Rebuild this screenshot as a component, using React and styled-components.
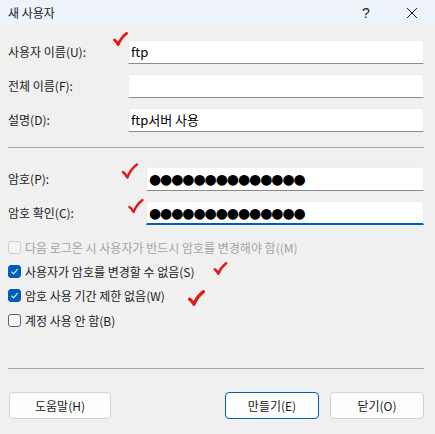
import React from 'react'
import styled, { createGlobalStyle } from 'styled-components'

const GlobalStyle = createGlobalStyle`
    html, body {
        margin: 0;
        padding: 0;
        background: #f0f0f0;
    }
    body {
        font-family: "Noto Sans CJK KR", "Noto Sans", sans-serif;
        font-size: 12px;
        color: #1a1a1a;
    }
`

// Dialog shell

const Dialog = styled.div`
    position: relative;
    width: 435px;
    height: 434px;
    background: #f0f0f0;
    display: flex;
    flex-direction: column;
    overflow: hidden;
`

const TitleBar = styled.div`
    height: 26px;
    background: #eef2f9;
    display: flex;
    align-items: center;
    padding-left: 8px;
`

const Title = styled.div`
    flex: 1;
    line-height: 16px;
`

const TitleButton = styled.div`
    width: 46px;
    height: 26px;
    display: flex;
    align-items: center;
    justify-content: center;
    font-family: "Liberation Sans", sans-serif;
    font-size: 14px;
`

const Body = styled.div`
    display: flex;
    flex-direction: column;
    padding: 0 11px 0 8px;
`

// Rows of label + field

const FieldGroup = styled.div`
    display: grid;
    grid-template-columns: ${p => p.labelWidth}px 1fr;
    row-gap: 10px;
    align-items: center;
    padding-top: ${p => p.top}px;
`

const Label = styled.div`
    line-height: 16px;
    white-space: nowrap;
`

const Input = styled.div`
    height: 24px;
    box-sizing: border-box;
    background: #fff;
    border: 1px solid #ececec;
    border-bottom: ${p => (p.focused ? '2px solid #005fb8' : '1px solid #8a8a8a')};
    border-radius: 3px 3px 0 0;
    padding: 0 2px;
    display: flex;
    align-items: center;
    font-size: 13px;
    line-height: 16px;
    color: #000;
`

const Dots = styled.span`
    font-family: "DejaVu Sans", sans-serif;
    font-size: 14px;
    letter-spacing: -1.1px;
    line-height: 16px;
`

const Separator = styled.div`
    height: 1px;
    background: #a6a6a6;
    margin-top: ${p => p.top}px;
`

// Checkbox list

const CheckList = styled.div`
    display: flex;
    flex-direction: column;
    padding-top: 10px;
`

const CheckRow = styled.label`
    height: 24.3px;
    display: flex;
    align-items: center;
    gap: 4px;
    color: ${p => (p.disabled ? '#a3a3a3' : '#1a1a1a')};
    white-space: nowrap;
`

const Box = styled.span`
    width: 13px;
    height: 13px;
    box-sizing: border-box;
    border-radius: 3px;
    display: flex;
    align-items: center;
    justify-content: center;
    background: ${p => (p.checked ? '#005fb8' : p.disabled ? '#f5f5f5' : '#f9f9f9')};
    border: 1px solid ${p => (p.checked ? '#005fb8' : p.disabled ? '#cfcfcf' : '#5c5c5c')};
`

const Checkbox = ({ checked, disabled, children }) => (
    <CheckRow disabled={disabled}>
        <Box checked={checked} disabled={disabled}>
            {checked && (
                <svg width="9" height="9" viewBox="0 0 9 9">
                    <path d="M1.5 4.8 L3.6 6.8 L7.6 2.2" fill="none" stroke="#fff" strokeWidth="1.1" />
                </svg>
            )}
        </Box>
        <span>{children}</span>
    </CheckRow>
)

// Footer buttons

const Footer = styled.div`
    display: flex;
    align-items: center;
    padding-top: 23px;
    padding-left: 1px;
    gap: 11px;
`

const Button = styled.div`
    width: ${p => p.w}px;
    height: 27px;
    box-sizing: border-box;
    background: #fdfdfd;
    border: 1px solid ${p => (p.primary ? '#005fb8' : '#d3d3d3')};
    border-radius: 4px;
    display: flex;
    align-items: center;
    justify-content: center;
    line-height: 16px;
    color: #1a1a1a;
`

const Spacer = styled.div`
    flex: 1;
`

// Red hand-drawn marks over the dialog

const Mark = styled.svg`
    position: absolute;
    left: ${p => p.x}px;
    top: ${p => p.y}px;
`

const RedCheck = ({ x, y, w = 16, h = 15, heavy }) => (
    <Mark x={x} y={y} width={w} height={h} viewBox="0 0 16 15">
        <path
            d="M1.5 8.5 C3 9.5 4.5 11.5 5.5 13.5 C7.5 8.5 10.5 4.5 14.5 1.5"
            fill="none"
            stroke="#e01b1b"
            strokeWidth={heavy ? 3 : 2.4}
            strokeLinecap="round"
            strokeLinejoin="round"
        />
    </Mark>
)

export default function App() {
    const dots = '●●●●●●●●●●●●●●'
    return (
        <>
            <GlobalStyle />
            <Dialog>
                <TitleBar>
                    <Title>새 사용자</Title>
                    <TitleButton>?</TitleButton>
                    <TitleButton>
                        <svg width="12" height="12" viewBox="0 0 12 12">
                            <path d="M1 1 L11 11 M11 1 L1 11" stroke="#1a1a1a" strokeWidth="1" />
                        </svg>
                    </TitleButton>
                </TitleBar>
                <Body>
                    <FieldGroup labelWidth={120} top={14}>
                        <Label>사용자 이름(U):</Label>
                        <Input>ftp</Input>
                        <Label>전체 이름(F):</Label>
                        <Input />
                        <Label>설명(D):</Label>
                        <Input>ftp서버 사용</Input>
                    </FieldGroup>
                    <Separator top={15} />
                    <FieldGroup labelWidth={138} top={19}>
                        <Label>암호(P):</Label>
                        <Input>
                            <Dots>{dots}</Dots>
                        </Input>
                        <Label>암호 확인(C):</Label>
                        <Input focused>
                            <Dots>{dots}</Dots>
                        </Input>
                    </FieldGroup>
                    <CheckList>
                        <Checkbox disabled>다음 로그온 시 사용자가 반드시 암호를 변경해야 함((M)</Checkbox>
                        <Checkbox checked>사용자가 암호를 변경할 수 없음(S)</Checkbox>
                        <Checkbox checked>암호 사용 기간 제한 없음(W)</Checkbox>
                        <Checkbox>계정 사용 안 함(B)</Checkbox>
                    </CheckList>
                    <Separator top={36} />
                    <Footer>
                        <Button w={102}>도움말(H)</Button>
                        <Spacer />
                        <Button w={94} primary>만들기(E)</Button>
                        <Button w={94}>닫기(O)</Button>
                    </Footer>
                </Body>
                <RedCheck x={113} y={31} w={15} h={16} heavy />
                <RedCheck x={120} y={163} w={20} h={16} />
                <RedCheck x={128} y={197} w={16} h={18} />
                <RedCheck x={212} y={262} w={17} h={13} heavy />
                <RedCheck x={188} y={290} w={17} h={16} heavy />
            </Dialog>
        </>
    )
}
